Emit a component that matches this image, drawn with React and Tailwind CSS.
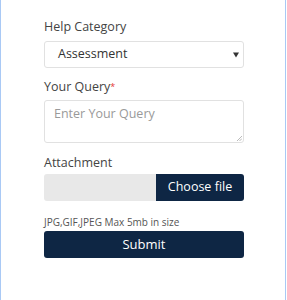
import React from "react";

export default function App() {
  const font = { fontFamily: '"Open Sans", "Noto Sans", Arial, sans-serif' };
  return (
    <div className="w-[287px] h-[300px] bg-white overflow-hidden" style={font}>
      <div className="w-[286px] h-[300px] border-x border-[#a9c9f5] pl-[43px] pr-[41px] pt-[18px]">
        <label className="block text-[12.5px] leading-[18px] text-[#444]">Help Category</label>
        <div className="mt-[5px] h-[27px] rounded-[3px] border border-[#e1e1e1] flex items-center justify-between pl-[13px] pr-[4px]">
          <span className="text-[12.5px] text-[#333]">Assessment</span>
          <svg width="6" height="6" viewBox="0 0 6 6" className="mt-[1px]">
            <path d="M0 0.5 H6 L3 5.5 Z" fill="#333" />
          </svg>
        </div>
        <label className="block mt-[10px] text-[12.5px] leading-[18px] text-[#444]">
          Your Query<span className="text-[#e53935] text-[9px] align-top">*</span>
        </label>
        <div className="mt-[4px] h-[43px] rounded-[3px] border border-[#e1e1e1] relative pl-[9px] pt-[4px]">
          <div className="text-[12.5px] leading-[18px] text-[#9a9a9a]">Enter Your Query</div>
          <svg width="5" height="5" viewBox="0 0 5 5" className="absolute right-[1px] bottom-[1px]">
            <path d="M5 0 L0 5 M5 2.5 L2.5 5" stroke="#aaa" strokeWidth="0.8" />
          </svg>
        </div>
        <label className="block mt-[11px] text-[12.5px] leading-[18px] text-[#444]">Attachment</label>
        <div className="mt-[2px] h-[27px] rounded-[3px] flex overflow-hidden">
          <div className="flex-1 bg-[#e8e8e8]" />
          <div className="w-[88px] bg-[#0e2644] text-white text-[12.5px] flex items-center justify-center">Choose file</div>
        </div>
        <p className="mt-[14px] text-[10px] leading-[14px] text-[#555]">JPG,GIF,JPEG Max 5mb in size</p>
        <button className="mt-[2px] w-full h-[27px] rounded-[3px] bg-[#0e2644] text-white text-[13px] flex items-center justify-center">Submit</button>
      </div>
    </div>
  );
}
